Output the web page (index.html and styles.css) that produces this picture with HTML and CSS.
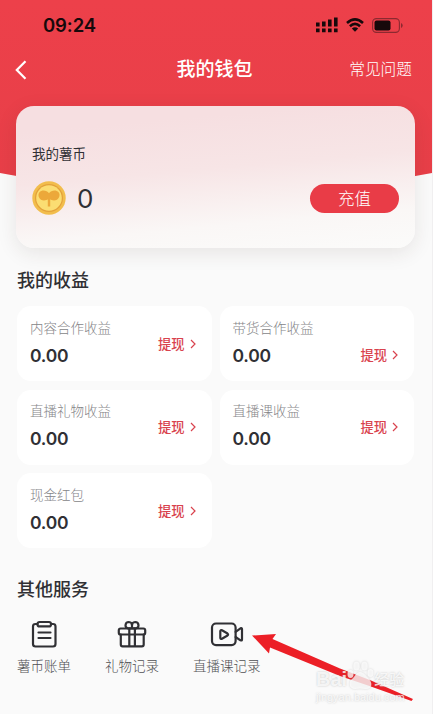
FILE: index.html
```html
<!DOCTYPE html>
<html lang="zh-CN">
<head>
    <meta charset="UTF-8">
    <meta name="viewport" content="width=device-width, initial-scale=1.0">
    <title>我的钱包</title>
    <link rel="stylesheet" href="styles.css">
</head>
<body>
    <div class="page">
        <svg class="header-bg" viewBox="0 0 432 190" preserveAspectRatio="none">
            <defs>
                <linearGradient id="red" x1="0" y1="0" x2="0" y2="1">
                    <stop offset="0" stop-color="#ed404a"/>
                    <stop offset="1" stop-color="#e73f48"/>
                </linearGradient>
            </defs>
            <path d="M0 0H432V173Q216 215 0 173Z" fill="url(#red)"/>
        </svg>

        <div class="status-bar">
            <span class="time">09:24</span>
            <div class="status-icons">
                <svg width="22" height="16" viewBox="0 0 22 16" fill="#17090b">
                    <path d="M0 5.5h3.6v4H0zM6 4.5h3.6v5H6zM12 2.5h3.6v7H12zM18 .5h3.6v9H18zM0 11.5h3.6v3.8H0zM6 11.5h3.6v3.8H6zM12 11.5h3.6v3.8H12zM18 11.5h3.6v3.8H18z"/>
                </svg>
                <svg class="wifi" width="18" height="14" viewBox="0 0 18 14" fill="none" stroke="#17090b" stroke-width="2.6">
                    <path d="M1 5Q9-2.2 17 5M3.9 8.2Q9 3.6 14.1 8.2"/>
                    <path d="M9 13.8L5.8 10.5Q9 7.8 12.2 10.5Z" fill="#17090b" stroke="none"/>
                </svg>
                <svg class="battery" width="31" height="15" viewBox="0 0 31 15">
                    <rect x=".6" y=".6" width="26.8" height="13.8" rx="3.8" fill="none" stroke="#8c2930" stroke-width="1.1"/>
                    <rect x="2.5" y="2.5" width="16" height="10" rx="2" fill="#17090b"/>
                    <path d="M29 5v5q1.7-.8 1.7-2.5T29 5z" fill="#8c2930"/>
                </svg>
            </div>
        </div>

        <div class="nav">
            <svg class="back" width="12" height="20" viewBox="0 0 12 20" fill="none" stroke="#fff" stroke-width="2.2">
                <path d="M10.5 1.2L1.8 10l8.7 8.8"/>
            </svg>
            <h1>我的钱包</h1>
            <a class="faq">常见问题</a>
        </div>

        <div class="balance-card">
            <div class="balance-label">我的薯币</div>
            <div class="balance-row">
                <svg width="34" height="34" viewBox="0 0 34 34">
                    <circle cx="17" cy="17" r="16.7" fill="#f2bd4c"/>
                    <circle cx="17" cy="17" r="14" fill="#e3a13b"/>
                    <circle cx="17" cy="17" r="12.8" fill="#fbdd72"/>
                    <path d="M17 12.2C14.8 9 9.8 8.4 7.4 11.2C5 14.3 7.5 19.5 12 19.5C13.8 19.5 15 18.9 15.8 18.3V25.5H18.2V18.3C19 18.9 20.2 19.5 22 19.5C26.5 19.5 29 14.3 26.6 11.2C24.2 8.4 19.2 9 17 12.2Z" fill="#eca83a"/>
                </svg>
                <span class="balance">0</span>
                <button class="recharge">充值</button>
            </div>
        </div>

        <h2 class="income-title">我的收益</h2>
        <div class="income">
            <div class="income-card">
                <div>
                    <div class="name">内容合作收益</div>
                    <div class="amount">0.00</div>
                </div>
                <a class="withdraw">提现<svg width="6" height="10" viewBox="0 0 6 10"><path d="M1 1l4 4-4 4"/></svg></a>
            </div>
            <div class="income-card low">
                <div>
                    <div class="name">带货合作收益</div>
                    <div class="amount">0.00</div>
                </div>
                <a class="withdraw">提现<svg width="6" height="10" viewBox="0 0 6 10"><path d="M1 1l4 4-4 4"/></svg></a>
            </div>
            <div class="income-card">
                <div>
                    <div class="name">直播礼物收益</div>
                    <div class="amount">0.00</div>
                </div>
                <a class="withdraw">提现<svg width="6" height="10" viewBox="0 0 6 10"><path d="M1 1l4 4-4 4"/></svg></a>
            </div>
            <div class="income-card">
                <div>
                    <div class="name">直播课收益</div>
                    <div class="amount">0.00</div>
                </div>
                <a class="withdraw">提现<svg width="6" height="10" viewBox="0 0 6 10"><path d="M1 1l4 4-4 4"/></svg></a>
            </div>
            <div class="income-card">
                <div>
                    <div class="name">现金红包</div>
                    <div class="amount">0.00</div>
                </div>
                <a class="withdraw">提现<svg width="6" height="10" viewBox="0 0 6 10"><path d="M1 1l4 4-4 4"/></svg></a>
            </div>
        </div>

        <h2 class="service-title">其他服务</h2>
        <div class="services">
            <a class="service">
                <svg width="34" height="30" viewBox="0 0 34 30">
                    <path d="M10.500 4H8.500Q6 4 6 6.500V24Q6 26.500 8.500 26.500H26Q28.500 26.500 28.500 24V6.500Q28.500 4 26 4H24"/>
                    <rect x="10.500" y="2" width="13.500" height="4.400" rx="2"/>
                    <path d="M11.500 12.500H23.500M11.500 18H23.500"/>
                </svg>
                薯币账单
            </a>
            <a class="service">
                <svg width="34" height="30" viewBox="0 0 34 30">
                    <rect x="3.800" y="8.500" width="26.400" height="6" rx="1.800"/>
                    <path d="M5.800 14.500V24.500Q5.800 26.300 7.600 26.300H26.900Q28.700 26.300 28.700 24.500V14.500M14.300 8.500V26M19.900 8.500V26"/>
                    <path d="M17 8.300H12.700Q10.500 7.600 10.500 5.200Q10.700 2 13.900 2Q17 2.200 17 5.300ZM17 8.300H21.300Q23.500 7.600 23.500 5.200Q23.200 2 20.100 2Q17 2.200 17 5.300"/>
                </svg>
                礼物记录
            </a>
            <a class="service">
                <svg width="34" height="30" viewBox="0 0 34 30">
                    <rect x="2" y="3.500" width="23.600" height="21.600" rx="4"/>
                    <path d="M10.300 11.200V17.800Q10.500 19.500 12 18.700L17.500 15.500Q18.700 14.500 17.500 13.500L12 10.300Q10.500 9.500 10.300 11.200ZM25.600 11.800L30.500 8.300Q32 7.500 32 9.100V19.500Q32 21 30.500 20.300L25.600 17"/>
                </svg>
                直播课记录
            </a>
        </div>

        <svg class="arrow" width="164" height="70" viewBox="0 0 164 70">
            <path d="M0 .5L24 -1L20.500 4L88 33.500L119 45.500L161 64L159.500 66L116 50.500L88 41L18 12.500L17 18.500Z" fill="#ec1f26"/>
        </svg>

        <div class="watermark">
            <div class="wm-brand">
                <span>Bai</span>
                <svg width="29" height="29" viewBox="0 0 29 29">
                    <ellipse cx="4.500" cy="13" rx="3" ry="4"/>
                    <ellipse cx="10.500" cy="5" rx="3.200" ry="4.500"/>
                    <ellipse cx="18.500" cy="5" rx="3.200" ry="4.500"/>
                    <ellipse cx="24.500" cy="12" rx="3" ry="4"/>
                    <path d="M14 11C10 11 9 16 6 18C2 21 3 28 9 28Q14 27 19 28C26 29 27 22 23 18C20 15 18 11 14 11Z"/>
                </svg>
                <span class="wm-cn">经验</span>
            </div>
            <div class="wm-url">jingyan.baidu.com</div>
        </div>
    </div>
</body>
</html>
```
FILE: styles.css
```css
* {
    margin: 0;
    padding: 0;
    box-sizing: border-box;
}

body {
    font-family: Inter, "Noto Sans CJK SC", sans-serif;
    background: #fafafa;
    color: #303034;
}

.page {
    position: relative;
    height: 714px;
    border-right: 1px solid #f0eff0;
    overflow: hidden;
}

.header-bg {
    position: absolute;
    top: 0;
    left: 0;
    width: 100%;
    height: 190px;
    z-index: -1;
}

.status-bar {
    height: 48px;
    padding: 2px 29px 0 43px;
    display: flex;
    align-items: center;
    justify-content: space-between;
}

.time {
    font-size: 18.5px;
    font-weight: 600;
    letter-spacing: -0.1px;
    color: #17090b;
}

.status-icons {
    display: flex;
    align-items: center;
}

.wifi {
    margin-left: 8px;
}

.battery {
    margin-left: 8px;
}

.nav {
    height: 43px;
    padding: 0 20px 0 15px;
    display: grid;
    grid-template-columns: 80px 1fr 78px;
    align-items: center;
    color: #fff;
}

.nav h1 {
    padding-top: 1px;
    font-size: 19px;
    font-weight: 500;
    line-height: 26px;
    text-align: center;
}

.faq {
    font-size: 15.7px;
    font-weight: 300;
    line-height: 24px;
    text-align: right;
    white-space: nowrap;
}

.balance-card {
    margin: 15px 17px 0 16px;
    height: 142px;
    padding: 38px 16px 0;
    border-radius: 18px;
    background: linear-gradient(175deg, #f6dfe1 15%, #f7e5e6 45%, #faf7f6 78%, #fbfbfa);
    box-shadow: 0 5px 20px rgba(60, 40, 30, 0.1);
}

.balance-label {
    font-size: 13.5px;
    line-height: 20px;
}

.balance-row {
    display: flex;
    align-items: center;
    margin-top: 17px;
}

.balance {
    margin: 2px 0 0 11px;
    font-size: 26px;
    line-height: 32px;
}

.recharge {
    width: 89px;
    height: 29px;
    margin-left: auto;
    border: none;
    border-radius: 15px;
    background: #e93c47;
    color: #fff;
    font: 300 16.5px/28px "Noto Sans CJK SC", sans-serif;
}

h2 {
    margin-left: 17px;
    font-size: 18px;
    font-weight: 500;
    line-height: 26px;
}

.income-title {
    margin-top: 20px;
}

.income {
    display: grid;
    grid-template-columns: 1fr 1fr;
    grid-auto-rows: 75px;
    gap: 8.5px 8px;
    margin: 12px 18px 0 17px;
}

.income-card {
    display: flex;
    align-items: center;
    justify-content: space-between;
    padding: 0 16px 0 13px;
    border-radius: 14px;
    background: #fff;
}

.name {
    margin-top: -2px;
    font-size: 13.5px;
    font-weight: 300;
    line-height: 20px;
    color: #858588;
}

.amount {
    margin-top: 6px;
    font-size: 17.5px;
    font-weight: 600;
    line-height: 24px;
    letter-spacing: -0.2px;
}

.withdraw {
    display: flex;
    align-items: center;
    gap: 5px;
    font-size: 13.3px;
    font-weight: 500;
    line-height: 20px;
    color: #d9434e;
}

.low .withdraw {
    margin-top: 23px;
}

.withdraw svg {
    fill: none;
    stroke: #d9434e;
    stroke-width: 1.2;
}

.service-title {
    margin-top: 29px;
}

.services {
    display: flex;
    gap: 34px;
    margin: 17px 0 0 17px;
}

.service {
    display: flex;
    flex-direction: column;
    align-items: center;
    gap: 6px;
    font-size: 13.5px;
    font-weight: 300;
    line-height: 20px;
    color: #505053;
}

.service svg {
    fill: none;
    stroke: #303034;
    stroke-width: 2.2;
    stroke-linecap: round;
    stroke-linejoin: round;
}

.arrow {
    position: absolute;
    top: 635px;
    left: 252px;
    overflow: visible;
}

.watermark {
    position: absolute;
    top: 660px;
    left: 316px;
    color: rgba(255, 255, 255, 0.8);
    text-shadow: 0 0 2px rgba(130, 130, 130, 0.45);
}

.wm-brand {
    display: flex;
    align-items: flex-end;
    height: 30px;
    font: bold 20px/22px "Liberation Sans", sans-serif;
}

.wm-brand svg {
    margin: 0 -1px;
    fill: rgba(255, 255, 255, 0.75);
    filter: drop-shadow(0 0 1px rgba(130, 130, 130, 0.4));
}

.wm-cn {
    font: 500 15px/23px "Noto Sans CJK SC", sans-serif;
}

.wm-url {
    font: 11px/14px "Liberation Sans", sans-serif;
}
```
